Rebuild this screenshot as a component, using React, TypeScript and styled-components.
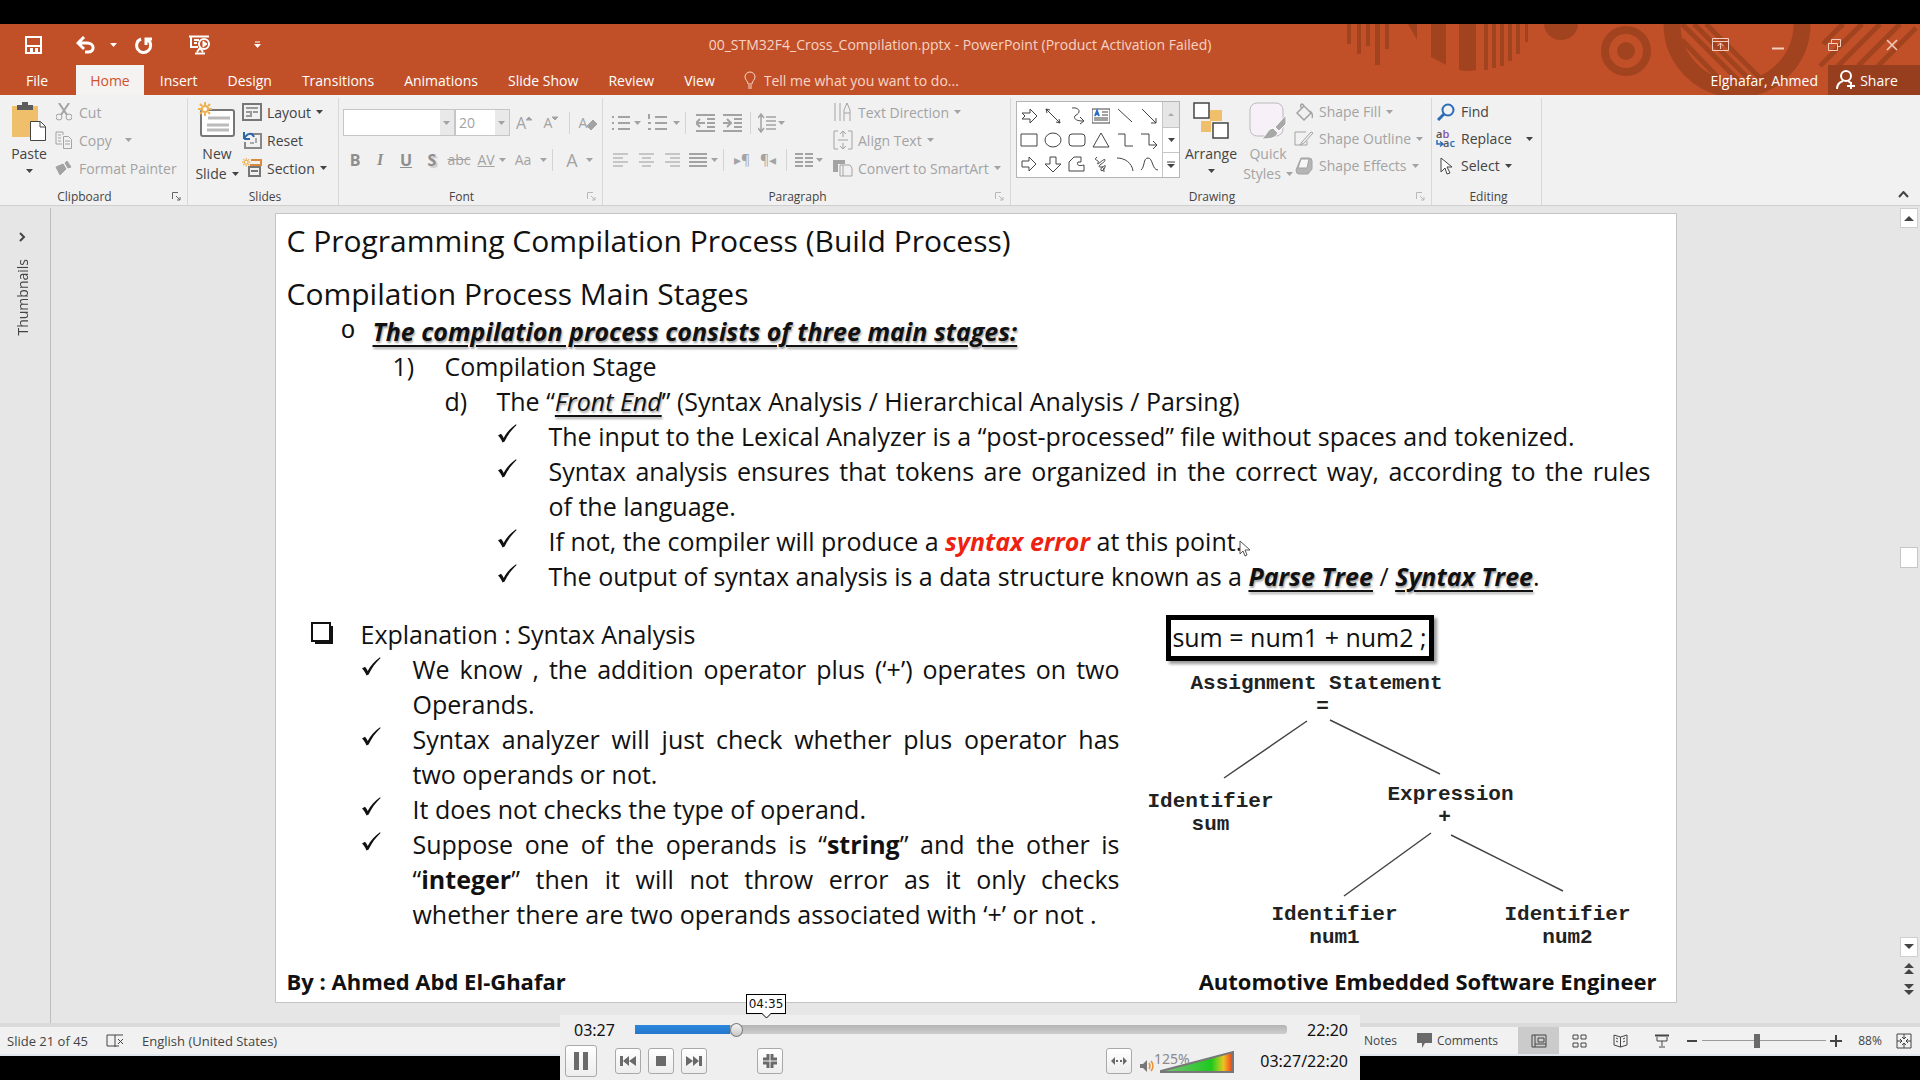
import React from "react";
import styled, { createGlobalStyle, css } from "styled-components";

const ui = '"Open Sans", "Noto Sans", sans-serif';
const slideFont = '"Open Sans", "Noto Sans", sans-serif';
const ink = "#444444";
const dim = "#a3a3a3";
const orange = "#c15029";
const darkOrange = "#a2431f";

const Global = createGlobalStyle`
  *, *::before, *::after { box-sizing: border-box; }
  body { margin: 0; background: #000; font-family: ${ui}; font-size: 14px; color: ${ink}; }
  button, select, input { font: inherit; color: inherit; }
  svg { display: block; flex: none; }
`;

const Screen = styled.div`
  position: relative;
  min-height: 100vh;
  padding: 24px 0;
  display: flex;
  flex-direction: column;
  background: #000;
  overflow: hidden;
`;

const plain = css`
  border: 0;
  margin: 0;
  padding: 0;
  background: transparent;
  display: flex;
  align-items: center;
  justify-content: center;
  white-space: nowrap;
  cursor: default;
`;

/* ---------- header ---------- */
const Header = styled.header`
  position: relative;
  background: ${orange};
  color: #fff;
`;
const Pattern = styled.svg`
  position: absolute;
  top: 0;
  right: 0;
`;
const TitleRow = styled.div`
  position: relative;
  display: grid;
  grid-template-columns: 1fr auto 1fr;
  align-items: center;
  height: 41px;
`;
const QuickAccess = styled.div`
  display: flex;
  align-items: center;
  padding-left: 4px;
  gap: 2px;
`;
const HeadButton = styled.button<{ $w: number }>`
  ${plain}
  width: ${(p) => p.$w}px;
  height: 38px;
`;
const Title = styled.h1`
  margin: 0;
  font-size: 14px;
  line-height: 20px;
  font-weight: 400;
  color: #f7d3c5;
`;
const WindowButtons = styled.div`
  display: flex;
  justify-content: flex-end;
  color: #f3cdbf;
`;
const TabRow = styled.nav`
  position: relative;
  display: flex;
  align-items: stretch;
  height: 30px;
  padding-left: 12px;
`;
const Tab = styled.button<{ $active?: boolean; $file?: boolean }>`
  ${plain}
  padding: 0 14px;
  margin-right: ${(p) => (p.$file ? 14 : 2)}px;
  background: ${(p) => (p.$active ? "#f4f3f2" : "transparent")};
  color: ${(p) => (p.$active ? "#d0512c" : "#fff")};
`;
const TellMe = styled.label`
  display: flex;
  align-items: center;
  gap: 8px;
  margin-left: 13px;
  color: #f9d6c8;
  input {
    width: 220px;
    padding: 0;
    border: 0;
    outline: 0;
    background: transparent;
  }
  input::placeholder { color: #f9d6c8; opacity: 1; }
`;
const Account = styled.div`
  display: flex;
  gap: 10px;
  margin-left: auto;
`;
const Person = styled.button`${plain}`;
const Share = styled.button`
  ${plain}
  gap: 4px;
  width: 92px;
  padding-right: 14px;
  background: #973e1f;
  color: #fff;
`;

/* ---------- ribbon ---------- */
const Ribbon = styled.section`
  display: flex;
  height: 111px;
  background: #f1f1f1;
  border-bottom: 1px solid #cfcfcf;
`;
const Group = styled.div<{ $w: number }>`
  flex: none;
  width: ${(p) => p.$w}px;
  margin: 3px 0 0;
  padding: 0 0 0 4px;
  border-right: 1px solid #d8d8d8;
  display: flex;
  flex-direction: column;
`;
const GroupBody = styled.div`
  display: flex;
  flex: 1;
`;
const GroupFoot = styled.div<{ $launch?: boolean }>`
  display: grid;
  grid-template-columns: ${(p) => (p.$launch ? "1fr 22px" : "1fr")};
  align-items: center;
  height: 18px;
  font-size: 12px;
  text-align: center;
`;
const Launcher = styled.button<{ $dim?: boolean }>`
  ${plain}
  color: ${(p) => (p.$dim ? "#b8b8b8" : "#666")};
`;
const Big = styled.button<{ $w: number; $dim?: boolean }>`
  ${plain}
  width: ${(p) => p.$w}px;
  height: 84px;
  padding-top: 4px;
  flex-direction: column;
  justify-content: flex-start;
  line-height: 20px;
  color: ${(p) => (p.$dim ? dim : ink)};
  svg.art { margin-bottom: 2px; }
  > svg:last-child { margin-top: 5px; }
`;
const CaretLine = styled.span`
  display: flex;
  align-items: center;
  justify-content: center;
  gap: 5px;
  min-height: 20px;
`;
const Stack = styled.div<{ $row: number }>`
  display: grid;
  grid-auto-rows: ${(p) => p.$row}px;
  align-content: start;
`;
const Row = styled.button<{ $dim?: boolean }>`
  ${plain}
  justify-content: flex-start;
  gap: 5px;
  color: ${(p) => (p.$dim ? dim : ink)};
`;
const Cell = styled.span`
  display: flex;
  justify-content: center;
  width: 20px;
`;
const Tools = styled.div<{ $w?: number }>`
  display: grid;
  grid-auto-rows: 27px;
  row-gap: 10px;
  align-content: start;
  padding-top: 11px;
  width: ${(p) => (p.$w ? p.$w + "px" : "auto")};
`;
const ToolRow = styled.div`
  display: flex;
  align-items: center;
  color: ${dim};
`;
const Tool = styled.button<{ $w: number; $b?: boolean; $i?: boolean; $u?: boolean; $s?: boolean; $shadow?: boolean; $pale?: boolean; $size?: number }>`
  ${plain}
  width: ${(p) => p.$w}px;
  height: 27px;
  font-size: ${(p) => p.$size ?? 16}px;
  font-weight: ${(p) => (p.$b ? 700 : 400)};
  font-style: ${(p) => (p.$i ? "italic" : "normal")};
  font-family: ${(p) => (p.$i ? '"Liberation Serif", serif' : "inherit")};
  text-decoration: ${(p) => (p.$u ? "underline" : p.$s ? "line-through" : "none")};
  text-shadow: ${(p) => (p.$shadow ? "2px 2px 1px #ccc" : "none")};
  color: ${(p) => (p.$pale ? "#c6c6c6" : p.$b ? "#8e8e8e" : "inherit")};
`;
const Bar = styled.span`
  width: 1px;
  height: 22px;
  margin: 0 5px;
  background: #d4d4d4;
`;
const Combo = styled.span<{ $w: number }>`
  position: relative;
  display: flex;
  width: ${(p) => p.$w}px;
  height: 27px;
  border: 1px solid #c6c6c6;
  background: linear-gradient(to left, #e9e9e9 14px, #fff 14px);
  select {
    appearance: none;
    width: 100%;
    padding: 0 3px;
    border: 0;
    background: transparent;
    outline: 0;
  }
  svg { position: absolute; right: 4px; top: 11px; pointer-events: none; }
`;
const Gallery = styled.div`
  display: flex;
  width: 164px;
  height: 77px;
  margin: 3px 0 0 1px;
  border: 1px solid #b5b5b5;
  background: #fff;
`;
const Shapes = styled.div`
  flex: 1;
  display: grid;
  grid-template-columns: repeat(6, 24px);
  grid-auto-rows: 24px;
  align-content: center;
`;
const GalleryScroll = styled.div`
  width: 17px;
  border-left: 1px solid #c6c6c6;
  display: grid;
  grid-template-rows: repeat(3, 1fr);
  button + button { border-top: 1px solid #c6c6c6; }
  button:first-child { background: #e6e6e6; }
`;
const ShapeButton = styled.button`${plain}`;
const Collapse = styled.button`
  ${plain}
  align-self: flex-end;
  margin-left: auto;
  width: 34px;
  height: 22px;
`;

/* ---------- workspace ---------- */
const Work = styled.main`
  flex: 1;
  display: flex;
  background: #e6e6e6;
`;
const Rail = styled.aside`
  width: 51px;
  padding: 21px 5px 0 0;
  margin-top: 2px;
  border-right: 1px solid #bdbdbd;
  display: flex;
  flex-direction: column;
  align-items: center;
  gap: 14px;
`;
const RailButton = styled.button`${plain} height: 16px;`;
const RailText = styled.span`
  writing-mode: vertical-rl;
  transform: rotate(180deg);
`;
const Canvas = styled.div`
  flex: 1;
  display: flex;
  justify-content: center;
  padding: 7px 0 20px;
`;
const Slide = styled.article`
  position: relative;
  width: 100%;
  max-width: 1402px;
  padding: 6px 19px 2px 11px;
  display: flex;
  flex-direction: column;
  background: #fff;
  border: 1px solid #c4c4c4;
  font-family: ${slideFont};
  font-size: 25px;
  line-height: 35px;
  color: #111;
`;
const SlideHead = styled.h2`
  margin: 0 0 12px;
  font-size: 30px;
  line-height: 41px;
  font-weight: 400;
  & + & { margin: 0; }
`;
const Points = styled.div`
  padding-right: 6px;
`;
const Line = styled.div<{ $indent: number; $mark: number }>`
  display: grid;
  grid-template-columns: ${(p) => p.$mark}px 1fr;
  padding-left: ${(p) => p.$indent}px;
  p { margin: 0; }
`;
const Full = styled.span`
  display: block;
  text-align: justify;
  text-align-last: justify;
`;
const Ring = styled.span`
  font-family: "Liberation Mono", monospace;
`;
const Key = styled.em<{ $bold?: boolean; $red?: boolean; $u?: boolean }>`
  font-weight: ${(p) => (p.$bold ? 700 : 400)};
  color: ${(p) => (p.$red ? "#ee2211" : "inherit")};
  text-decoration: ${(p) => (p.$u ? "underline" : "none")};
  text-decoration-thickness: 2px;
  text-underline-offset: 4px;
  text-shadow: ${(p) => (p.$u ? "1px 2px 2px rgba(0,0,0,.35)" : "none")};
`;
const Tick = styled.svg`margin: 5px 0 0 2px;`;
const Lower = styled.div`
  display: grid;
  grid-template-columns: 833px 1fr;
  column-gap: 20px;
  margin-top: 21px;
`;
const Notes = styled.div`padding-top: 2px;`;
const Tree = styled.figure`
  position: relative;
  margin: 0;
  height: 340px;
`;
const Formula = styled.div`
  width: 268px;
  height: 46px;
  margin-left: 26px;
  border: 5px solid #000;
  box-shadow: 3px 3px 3px rgba(0, 0, 0, 0.4);
  text-align: center;
  line-height: 35px;
  white-space: nowrap;
`;
const Edges = styled.svg`
  position: absolute;
  left: 0;
  top: 0;
`;
const Node = styled.div<{ $x: number; $y: number }>`
  position: absolute;
  left: ${(p) => p.$x - 140}px;
  top: ${(p) => p.$y}px;
  width: 280px;
  text-align: center;
  font: 700 21px/23px "Liberation Mono", monospace;
  color: #222;
`;
const SlideFoot = styled.footer`
  display: flex;
  justify-content: space-between;
  margin-top: auto;
  font-size: 22px;
  line-height: 38px;
  font-weight: 700;
`;
const Pointer = styled.svg`
  position: absolute;
  left: 963px;
  top: 326px;
`;
const Scroll = styled.div`
  width: 20px;
  padding: 2px 2px 22px 0;
  display: flex;
  flex-direction: column;
  align-items: center;
  justify-content: space-between;
`;
const ScrollButton = styled.button<{ $flat?: boolean }>`
  ${plain}
  width: 18px;
  height: ${(p) => (p.$flat ? 22 : 20)}px;
  background: ${(p) => (p.$flat ? "transparent" : "#fff")};
  border: ${(p) => (p.$flat ? 0 : "1px solid #cfcfcf")};
`;
const ScrollEnd = styled.div`
  display: grid;
`;
const Thumb = styled.span`
  width: 18px;
  height: 21px;
  margin-bottom: 50px;
  background: #fff;
  border: 1px solid #c6c6c6;
`;

/* ---------- status bar ---------- */
const Status = styled.footer`
  display: flex;
  align-items: center;
  height: 33px;
  padding: 0 6px 0 7px;
  border-top: 4px solid #dadada;
  border-bottom: 2px solid #dfe6ee;
  background: #f1f1f1;
  font-size: 12px;
`;
const StatusButton = styled.button<{ $w?: number; $on?: boolean }>`
  ${plain}
  gap: 5px;
  height: 27px;
  width: ${(p) => (p.$w ? p.$w + "px" : "auto")};
  background: ${(p) => (p.$on ? "#cbcbcb" : "transparent")};
`;
const StatusLeft = styled.div`
  display: flex;
  align-items: center;
  gap: 18px;
  font-size: 13px;
`;
const StatusRight = styled.div`
  display: flex;
  align-items: center;
  margin-left: auto;
`;
const StatusTexts = styled.div`
  display: flex;
  gap: 20px;
  margin-right: 20px;
`;
const Zoom = styled.input`
  appearance: none;
  width: 124px;
  height: 16px;
  margin: 0;
  background: linear-gradient(#9a9a9a, #9a9a9a) center / 100% 1px no-repeat;
  &::-webkit-slider-thumb {
    appearance: none;
    width: 6px;
    height: 14px;
    background: #6a6a6a;
  }
`;
const Percent = styled.output`
  width: 48px;
  text-align: center;
`;

/* ---------- media player ---------- */
const Player = styled.section`
  position: absolute;
  bottom: 0;
  left: calc(50% - 400px);
  width: 800px;
  height: 65px;
  padding: 2px 12px 0 5px;
  background: #efefef;
  font-family: "Noto Sans", "Open Sans", sans-serif;
  font-size: 16px;
  color: #111;
`;
const SeekRow = styled.div`
  display: flex;
  align-items: center;
  height: 25px;
  padding-left: 9px;
`;
const Time = styled.time<{ $right?: boolean }>`
  width: 61px;
  text-align: ${(p) => (p.$right ? "right" : "left")};
`;
const Track = styled.div`
  flex: 1;
  height: 9px;
  display: flex;
  align-items: center;
  border-radius: 3px;
  background: linear-gradient(#b4b4b4, #cdcdcd);
`;
const Seek = styled.input`
  appearance: none;
  flex: 1;
  height: 15px;
  margin: 0 -6px;
  background: linear-gradient(#2a86dc, #2478cc) 6px center / 95px 9px no-repeat;
  &::-webkit-slider-thumb {
    appearance: none;
    width: 13px;
    height: 14px;
    border: 1px solid #7d7d7d;
    border-radius: 50%;
    background: linear-gradient(#f4f4f4, #c9c9c9);
  }
`;
const Controls = styled.div`
  display: flex;
  align-items: center;
  height: 38px;
`;
const PlayerButton = styled.button<{ $big?: boolean; $before?: number }>`
  ${plain}
  width: ${(p) => (p.$big ? 32 : 26)}px;
  height: ${(p) => (p.$big ? 32 : 26)}px;
  margin-left: ${(p) => p.$before ?? 7}px;
  border: 1px solid #a9a9a9;
  border-radius: 3px;
  background: linear-gradient(#fff, #ededed);
  color: #6a6a6a;
`;
const Volume = styled.label`
  position: relative;
  display: flex;
  align-items: flex-end;
  height: 26px;
  margin-left: 7px;
  input {
    position: absolute;
    inset: 0;
    width: 100%;
    margin: 0;
    opacity: 0;
  }
  output {
    position: absolute;
    left: 15px;
    top: 3px;
    font-size: 14px;
    line-height: 16px;
    color: #8a8a8a;
  }
`;
const Clock = styled.span`margin-left: auto;`;
const Bubble = styled.div`
  position: absolute;
  left: 186px;
  top: -21px;
  width: 40px;
  height: 20px;
  border: 1px solid #000;
  background: #fff;
  text-align: center;
  font: 12px/18px "DejaVu Sans", sans-serif;
  svg { position: absolute; left: 15px; top: 18px; }
`;

/* ---------- drawings ---------- */
type A = { w: number; h: number; children: React.ReactNode; s?: number; c?: string; f?: string };
const Art = ({ w, h, children, s = 1, c, f = "none" }: A) => (
  <svg className={c} width={w} height={h} viewBox={`0 0 ${w} ${h}`} fill={f} stroke="currentColor" strokeWidth={s} aria-hidden="true">
    {children}
  </svg>
);
const Caret = () => (
  <svg width="7" height="4" viewBox="0 0 7 4" fill="currentColor" aria-hidden="true"><path d="M0 0h7L3.5 4z" /></svg>
);
const Lines = ({ rows, w = 18, h = 18 }: { rows: [number, number][]; w?: number; h?: number }) => (
  <Art w={w} h={h} s={2}>
    {rows.map(([a, b], i) => <path key={i} d={`M${a} ${3 + i * 4}H${b}`} />)}
  </Art>
);
const Check = () => (
  <Tick width="19" height="20" viewBox="0 0 19 20" fill="#111"><path d="M0 11.5L3 9.8C4.200 11 5 12.500 5.700 14C8.600 8.600 12.600 4 18 .3L18.600 1C13.600 5.800 9.600 11 6.600 17.600L4.500 18.400C3.400 15.800 2 13.400 0 11.5z" /></Tick>
);
const shapes: React.ReactNode[] = [
  <path d="M2 6h8V2l7 7-7 7v-4H2l3-3z" />,
  <path d="M2 2l14 14M2 2l4 1M2 2l1 4M16 16l-4-1M16 16l-1-4" />,
  <path d="M4 1c8-1 9 5 4 7-3 2-2 6 7 6M12 10l4 4-4 3" />,
  <g><path d="M0 2h18v14H0zM10 5h6M10 8h6M2 11h14M2 13h14" /><path d="M3 9l2-5 2 5M4 7h3" stroke="#2a6fc0" strokeWidth="2" /></g>,
  <path d="M2 2l14 13" />,
  <path d="M2 2l14 14M16 16v-5M16 16h-5" />,
  <path d="M1 3h16v12H1z" />,
  <ellipse cx="9" cy="9" rx="8" ry="7" />,
  <rect x="1" y="3" width="16" height="12" rx="3" />,
  <path d="M9 2l8 14H1z" />,
  <path d="M2 3h7v12h8" />,
  <path d="M1 3h8v11h7M13 10l4 4-4 4" />,
  <path d="M2 6h7V2l7 7-7 7v-4H2z" />,
  <path d="M6 2h6v7h5l-8 8-8-8h5z" />,
  <path d="M1 16V7l5-5h7v5h-3c-2 4 2 4 6 3v6z" />,
  <path d="M5 2c-5 4 3 2 1 6s7-6 7-3-9 6-5 7 6-4 5 0-5 5-4 2 3-2 3 3" />,
  <path d="M1 3c8 0 15 5 16 13" />,
  <path d="M1 15C5 12 3 3 8 3s4 12 10 12" />,
];
const Burst = ({ x = 0, y = 0 }: { x?: number; y?: number }) => (
  <g stroke="#efb152" strokeWidth="2" transform={`translate(${x} ${y})`}><path d="M7 0v3M7 11v3M0 7h3M11 7h3M2 2l2 2M10 10l2 2M12 2l-2 2M2 12l2-2" /><circle cx="7" cy="7" r="3" fill="#fff" /></g>
);

const Foot = ({ name, launcher, faded }: { name: string; launcher?: boolean; faded?: boolean }) => (
  <GroupFoot $launch={launcher}>
    <span>{name}</span>
    {launcher && (
      <Launcher $dim={faded} aria-label={name + " settings"}>
        <Art w={9} h={9}><path d="M.5 7V.5H6M4 4l4 4M8 5v3H5" /></Art>
      </Launcher>
    )}
  </GroupFoot>
);

const tabs = ["Insert", "Design", "Transitions", "Animations", "Slide Show", "Review", "View"];

export default function App() {
  return (
    <Screen>
      <Global />
      <Header>
        <Pattern width="580" height="71" viewBox="1340 24 580 71" fill={darkOrange}>
          <path d="M1347 24h4v20h-4zM1357 24h4v30h-4zM1366 24h4v22h-4zM1375 24h5v41h-5zM1385 24h4v25h-4zM1408 24h9v16zM1431 24h15v41l-15-8zM1459 24h17v46q-8 2-17 0z" />
          <path d="M1484 24h4v46h-4zM1492 24h4v44h-4zM1500 24h4v42h-4zM1508 24h4v37h-4zM1516 24h4v30h-4zM1525 24h3v18h-3z" />
          <path d="M1544 24h34a17 16 0 0 1-34 0z" />
          <circle cx="1626" cy="51" r="21" fill="none" stroke={darkOrange} strokeWidth="8" />
          <circle cx="1626" cy="51" r="9" />
          <circle cx="1737" cy="24" r="65" fill="none" stroke={darkOrange} strokeWidth="17" />
          <g stroke={darkOrange} strokeWidth="5"><path d="M1682 24l62 62M1694 24l58 58M1706 24l54 54M1682 40l44 46M1843 24l-20 20M1862 24l-42 42M1880 24l-42 42M1900 24l-42 42M1916 28l-38 38" /></g>
        </Pattern>
        <TitleRow>
          <QuickAccess>
            <HeadButton $w={58} aria-label="Save"><Art w={17} h={18} s={2}><path d="M1 1h15v16H1zM1 10h15" /><path d="M5 12h3v5H5zM10 12h3v5h-3z" fill="#fff" stroke="none" /></Art></HeadButton>
            <HeadButton $w={44} aria-label="Undo"><Art w={20} h={18} s={3}><path d="M2 7h9c8 0 8 9 1 9H9M8 1L2 7l6 6" /></Art></HeadButton>
            <HeadButton $w={6} aria-label="Undo history"><Caret /></HeadButton>
            <HeadButton $w={52} aria-label="Repeat"><Art w={18} h={18} s={3}><path d="M6 3a7 7 0 1 0 7 1M11 9V3h6" /></Art></HeadButton>
            <HeadButton $w={56} aria-label="Start slide show"><Art w={22} h={20}><path d="M0 1.500h20M2 2v10h7M5 5h5M5 8h3M8 17l3-4 3 4M6 18.500h10" strokeWidth="2" /><circle cx="15" cy="9" r="5" strokeWidth="2" /><path d="M14 6l4 3-4 3z" fill="#fff" /></Art></HeadButton>
            <HeadButton $w={54} aria-label="Customize toolbar"><Art w={7} h={8}><path d="M1 1h5" /><path d="M0 3h7L3.500 7z" fill="#fff" stroke="none" /></Art></HeadButton>
          </QuickAccess>
          <Title>00_STM32F4_Cross_Compilation.pptx - PowerPoint (Product Activation Failed)</Title>
          <WindowButtons>
            <HeadButton $w={57} aria-label="Ribbon display"><Art w={17} h={13}><path d="M.5.5h16v12H.5zM.5 3.500h16M8.500 11V5M5.500 8l3-3 3 3" /></Art></HeadButton>
            <HeadButton $w={57} aria-label="Minimize"><Art w={12} h={12}><path d="M0 9.500h12" strokeWidth="2" /></Art></HeadButton>
            <HeadButton $w={57} aria-label="Restore"><Art w={13} h={12}><path d="M.5 4.500h9v7h-9zM3.500 4V.500h9v7H10" /></Art></HeadButton>
            <HeadButton $w={57} aria-label="Close"><Art w={12} h={12}><path d="M1 1l10 10M11 1L1 11" strokeWidth="1.500" /></Art></HeadButton>
          </WindowButtons>
        </TitleRow>
        <TabRow>
          <Tab $file>File</Tab>
          <Tab $active>Home</Tab>
          {tabs.map((t) => <Tab key={t}>{t}</Tab>)}
          <TellMe>
            <Art w={12} h={18}><path d="M4 13c0-3-3-4-3-7a5 5 0 0 1 10 0c0 3-3 4-3 7zM4 15h4M4 17h4" /></Art>
            <input aria-label="Tell me" placeholder="Tell me what you want to do..." />
          </TellMe>
          <Account>
            <Person>Elghafar, Ahmed</Person>
            <Share>
              <Art w={20} h={20} s={2}><circle cx="10" cy="6" r="5" /><path d="M1 19c0-5 3-7 6-8M12 11l3 2M15 12v7M11 16h8" /></Art>
              Share
            </Share>
          </Account>
        </TabRow>
      </Header>

      <Ribbon>
        <Group $w={188}>
          <GroupBody>
            <Big $w={50}>
              <Art w={36} h={40} c="art"><path d="M1 4h26v31H1z" fill="#f0bf6c" stroke="none" /><path d="M6 3h5V0h6v3h5v5H6z" fill="#5c5c5c" stroke="none" /><path d="M19.500 19.500h10l5 5v14h-15z" fill="#fff" /><path d="M29 20v5h5" /></Art>
              Paste
              <Caret />
            </Big>
            <Stack $row={28}>
              <Row $dim><Cell><Art w={16} h={18}><path d="M3 0l8 12M13 0L5 12" strokeWidth="2" /><circle cx="3" cy="14" r="3" /><circle cx="13" cy="14" r="3" /></Art></Cell>Cut</Row>
              <Row $dim><Cell><Art w={18} h={18}><path d="M7 13H1V1h7v3M3 4h3M3 7h3M3 10h3M8.500 5.500h5l3 3v9h-8zM10 10h5M10 13h5" /></Art></Cell>Copy<CaretLine>&nbsp;<Caret /></CaretLine></Row>
              <Row $dim><Cell><Art w={18} h={16} f="currentColor"><path d="M1 7l7-3 3 5-6 6zM10 3l2-2 4 6-3 1z" /></Art></Cell>Format Painter</Row>
            </Stack>
          </GroupBody>
          <Foot name="Clipboard" launcher />
        </Group>

        <Group $w={151}>
          <GroupBody>
            <Big $w={50}>
              <Art w={38} h={40} c="art"><rect x="3" y="8" width="33" height="26" rx="2" fill="#fff" stroke="#777" strokeWidth="2" /><path d="M10 16h22M9 23h22M9 28h22" stroke="#bbb" strokeWidth="3" /><Burst /></Art>
              <span>New</span>
              <CaretLine>Slide <Caret /></CaretLine>
            </Big>
            <Stack $row={28}>
              <Row><Cell><Art w={20} h={18}><path d="M1 1h18v16H1z" strokeWidth="2" stroke="#777" /><path d="M4 5h12M4 9h5v4H4M11 9h5" stroke="#999" strokeWidth="2" /></Art></Cell>Layout<Caret /></Row>
              <Row><Cell><Art w={20} h={18}><path d="M10 3h9v14H3v-6" stroke="#888" strokeWidth="2" /><path d="M2 8l0-7M2 8h6M2 8c3-6 8-7 10-2" stroke="#2c66a8" strokeWidth="2" /><path d="M8 12h4M14 7v5" stroke="#aaa" strokeWidth="2" /></Art></Cell>Reset</Row>
              <Row><Cell><Art w={20} h={20}><g transform="scale(.6)"><Burst /></g><path d="M9 2h10v5H8" stroke="#d98a3c" strokeWidth="2" /><path d="M7 9h11v9H7zM9 13h7" stroke="#777" strokeWidth="2" /></Art></Cell>Section<Caret /></Row>
            </Stack>
          </GroupBody>
          <Foot name="Slides" />
        </Group>

        <Group $w={264}>
          <GroupBody>
            <Tools>
              <ToolRow>
                <Combo $w={112}><select aria-label="Font"><option></option></select><Caret /></Combo>
                <Combo $w={55}><select aria-label="Font size"><option>20</option></select><Caret /></Combo>
                <Tool $w={28} aria-label="Grow font">A<Art w={6} h={14}><path d="M0 4l3-3 3 3z" fill="currentColor" /></Art></Tool>
                <Tool $w={26} $size={14} aria-label="Shrink font">A<Art w={6} h={14}><path d="M0 1h6L3 4z" fill="currentColor" /></Art></Tool>
                <Bar />
                <Tool $w={26} $size={14} aria-label="Clear formatting">A<Art w={10} h={16}><path d="M0 11l6-6 4 4-6 6z" fill="currentColor" /></Art></Tool>
              </ToolRow>
              <ToolRow>
                <Tool $w={24} $b>B</Tool>
                <Tool $w={26} $b $i>I</Tool>
                <Tool $w={26} $b $u>U</Tool>
                <Tool $w={26} $b $shadow>S</Tool>
                <Tool $w={28} $s $size={14}>abc</Tool>
                <Tool $w={26} $u $size={14}>AV</Tool>
                <Caret />
                <Tool $w={34} $size={14}>Aa</Tool>
                <Caret />
                <Bar />
                <Tool $w={28} $size={18}>A</Tool>
                <Caret />
              </ToolRow>
            </Tools>
          </GroupBody>
          <Foot name="Font" launcher faded />
        </Group>

        <Group $w={408}>
          <GroupBody>
            <Tools $w={226}>
              <ToolRow>
                <Tool $w={27} aria-label="Bullets"><Art w={18} h={18} s={2}><path d="M0 3h2M0 9h2M0 15h2M6 3h12M6 9h12M6 15h12" /></Art></Tool>
                <Caret />
                <Tool $w={32} aria-label="Numbering"><Art w={20} h={18} s={2}><path d="M2 0v5M1 9h3M1 15h3M8 3h12M8 9h12M8 15h12" /></Art></Tool>
                <Caret />
                <Bar />
                <Tool $w={28} aria-label="Decrease indent"><Art w={19} h={18} s={2}><path d="M0 1h19M11 5h8M11 9h8M11 13h8M0 17h19M0 9h9M4 5L0 9l4 4" /></Art></Tool>
                <Tool $w={26} aria-label="Increase indent"><Art w={19} h={18} s={2}><path d="M0 1h19M11 5h8M11 9h8M11 13h8M0 17h19M0 9h9M4 5l4 4-4 4" /></Art></Tool>
                <Bar />
                <Tool $w={22} aria-label="Line spacing"><Art w={18} h={20}><path d="M3 2v16M0 5l3-4 3 4M0 15l3 4 3-4M8 4h10M8 8h10M8 12h10M8 16h10" strokeWidth="1.500" /></Art></Tool>
                <Caret />
              </ToolRow>
              <ToolRow>
                <Tool $w={26} $pale aria-label="Align left"><Lines w={15} rows={[[0, 15], [0, 10], [0, 15], [0, 10]]} /></Tool>
                <Tool $w={26} $pale aria-label="Center"><Lines w={15} rows={[[0, 15], [3, 12], [0, 15], [3, 12]]} /></Tool>
                <Tool $w={26} $pale aria-label="Align right"><Lines w={15} rows={[[0, 15], [5, 15], [0, 15], [5, 15]]} /></Tool>
                <Tool $w={26} aria-label="Justify"><Lines rows={[[0, 18], [0, 18], [0, 18], [0, 18]]} /></Tool>
                <Caret />
                <Bar />
                <Tool $w={26} $size={14} aria-label="Left to right">▸¶</Tool>
                <Tool $w={26} $size={14} aria-label="Right to left">¶◂</Tool>
                <Bar />
                <Tool $w={24} aria-label="Columns"><Art w={18} h={18} s={2}><path d="M0 3h8M10 3h8M0 7h8M10 7h8M0 11h8M10 11h8M0 15h8M10 15h8" /></Art></Tool>
                <Caret />
              </ToolRow>
            </Tools>
            <Stack $row={28}>
              <Row $dim><Cell><Art w={20} h={20}><path d="M2 1v18M7 1v18M11 19V8l3-7 3 7v11M11 11h6" /></Art></Cell>Text Direction<Caret /></Row>
              <Row $dim><Cell><Art w={20} h={20}><path d="M5 1H1v18h4M15 1h4v18h-4M5 10h10M10 1v6M7 4l3-3 3 3M10 13v6M7 16l3 3 3-3" /></Art></Cell>Align Text<Caret /></Row>
              <Row $dim><Cell><Art w={20} h={18}><path d="M0 1h12v4H5v8H0z" fill="currentColor" stroke="none" /><path d="M7 6h10l2 3v8H7zM10 6v11" /></Art></Cell>Convert to SmartArt<Caret /></Row>
            </Stack>
          </GroupBody>
          <Foot name="Paragraph" launcher faded />
        </Group>

        <Group $w={421}>
          <GroupBody>
            <Gallery>
              <Shapes>
                {shapes.map((s, i) => <ShapeButton key={i} aria-label={"Shape " + (i + 1)}><Art w={18} h={18}>{s}</Art></ShapeButton>)}
              </Shapes>
              <GalleryScroll>
                <ShapeButton aria-label="Previous shapes"><Art w={6} h={4}><path d="M0 3l3-3 3 3z" fill="#aaa" stroke="none" /></Art></ShapeButton>
                <ShapeButton aria-label="Next shapes"><Caret /></ShapeButton>
                <ShapeButton aria-label="More shapes"><Art w={8} h={8}><path d="M0 1h8" /><path d="M0 3h8L4 7z" fill="currentColor" stroke="none" /></Art></ShapeButton>
              </GalleryScroll>
            </Gallery>
            <Big $w={62}>
              <Art w={36} h={40} c="art"><path d="M17 8h12v11H17zM8 19h10v11H8z" fill="#f0bf6c" stroke="none" /><path d="M1 1h15v15H1zM20 21h15v15H20z" fill="#fff" strokeWidth="1.500" /></Art>
              Arrange
              <Caret />
            </Big>
            <Big $w={52} $dim>
              <Art w={38} h={40} c="art"><rect x="1" y="1" width="33" height="33" rx="7" fill="#f7f0f8" stroke="#bdb7be" /><path d="M37 13v9l-7 7-4-4zM24 26l5 5c-3 6-9 6-17 6 5-2 6-10 12-11z" fill="#a8a8a8" stroke="#fff" /></Art>
              <span>Quick</span>
              <CaretLine>Styles <Caret /></CaretLine>
            </Big>
            <Stack $row={27}>
              <Row $dim><Cell><Art w={18} h={18}><path d="M2 10l7-7 7 7-7 7zM9 3C7-1 4 2 7 6M15 8c3 3 3 5 2 7" strokeWidth="1.500" /></Art></Cell>Shape Fill<Caret /></Row>
              <Row $dim><Cell><Art w={20} h={16}><path d="M12 1H1v13h12v-4M17 1L8 11l-2 3 4-2 9-10z" /></Art></Cell>Shape Outline<Caret /></Row>
              <Row $dim><Cell><Art w={18} h={18}><path d="M6 1h8q3 0 3 3v8l-4 5H4q-3 0-3-4z" fill="#b5b5b5" /><path d="M6 2h8l-2 9H3z" fill="#f6f6f6" /></Art></Cell>Shape Effects<Caret /></Row>
            </Stack>
          </GroupBody>
          <Foot name="Drawing" launcher faded />
        </Group>

        <Group $w={110}>
          <GroupBody>
            <Stack $row={27}>
              <Row><Cell><Art w={18} h={18} s={2}><circle cx="11" cy="7" r="5.500" stroke="#2b6cb8" /><path d="M7 11l-6 6" stroke="#2b6cb8" strokeWidth="3" /></Art></Cell>Find</Row>
              <Row><Cell><svg width="20" height="26" viewBox="0 0 20 26" fontFamily="Open Sans" fontWeight="600" fontSize="11"><text x="0" y="12" fill="#555">a<tspan fill="#8b4fb0">b</tspan></text><text x="7" y="21" fill="#555">a<tspan fill="#2b6cb8">c</tspan></text><path d="M1 14v4h5M4 15.500l3 2.500-3 2.500" fill="none" stroke="#2b6cb8" strokeWidth="1.500" /></svg></Cell>Replace<CaretLine>&nbsp;<Caret /></CaretLine></Row>
              <Row><Cell><Art w={13} h={18}><path d="M1 1v14l4-4 2 6 3-1-3-6h5z" fill="#fff" /></Art></Cell>Select<Caret /></Row>
            </Stack>
          </GroupBody>
          <Foot name="Editing" />
        </Group>
        <Collapse aria-label="Collapse ribbon"><Art w={11} h={7} s={2}><path d="M1 6l4.500-5L10 6" /></Art></Collapse>
      </Ribbon>

      <Work>
        <Rail>
          <RailButton aria-label="Expand thumbnails"><Art w={7} h={10} s={2}><path d="M1 1l4 4-4 4" /></Art></RailButton>
          <RailText>Thumbnails</RailText>
        </Rail>
        <Canvas>
          <Slide>
            <SlideHead>C Programming Compilation Process (Build Process)</SlideHead>
            <SlideHead>Compilation Process Main Stages</SlideHead>
            <Points>
              <Line $indent={54} $mark={32}><Ring>o</Ring><p><Key $bold $u>The compilation process consists of three main stages:</Key></p></Line>
              <Line $indent={106} $mark={52}><span>1)</span><p>Compilation Stage</p></Line>
              <Line $indent={158} $mark={52}><span>d)</span><p>The “<Key $u>Front End</Key>” (Syntax Analysis / Hierarchical Analysis / Parsing)</p></Line>
              <Line $indent={209} $mark={53}><Check /><p>The input to the Lexical Analyzer is a “post-processed” file without spaces and tokenized.</p></Line>
              <Line $indent={209} $mark={53}><Check /><p><Full>Syntax analysis ensures that tokens are organized in the correct way, according to the rules</Full> of the language.</p></Line>
              <Line $indent={209} $mark={53}><Check /><p>If not, the compiler will produce a <Key $bold $red>syntax error</Key> at this point.</p></Line>
              <Line $indent={209} $mark={53}><Check /><p>The output of syntax analysis is a data structure known as a <Key $bold $u>Parse Tree</Key> / <Key $bold $u>Syntax Tree</Key>.</p></Line>
            </Points>
            <Lower>
              <Notes>
                <Line $indent={22} $mark={52}>
                  <Tick width="22" height="22" viewBox="0 0 22 22"><path d="M4 4h18v18H4z" fill="#111" /><path d="M1 1h18v18H1z" fill="#fff" stroke="#111" strokeWidth="2" /></Tick>
                  <p>Explanation : Syntax Analysis</p>
                </Line>
                <Line $indent={73} $mark={53}><Check /><p><Full>We know , the addition operator plus (‘+’) operates on two</Full> Operands.</p></Line>
                <Line $indent={73} $mark={53}><Check /><p><Full>Syntax analyzer will just check whether plus operator has</Full> two operands or not.</p></Line>
                <Line $indent={73} $mark={53}><Check /><p>It does not checks the type of operand.</p></Line>
                <Line $indent={73} $mark={53}><Check /><p><Full>Suppose one of the operands is “<b>string</b>” and the other is</Full> <Full>“<b>integer</b>” then it will not throw error as it only checks</Full> whether there are two operands associated with ‘+’ or not .</p></Line>
              </Notes>
              <Tree>
                <Formula>sum = num1 + num2 ;</Formula>
                <Edges width="500" height="340" viewBox="1140 615 500 340" stroke="#444" strokeWidth="1.500">
                  <path d="M1307 721L1224 778M1330 720L1440 774M1431 833L1344 896M1451 835L1563 891" />
                </Edges>
                <Node $x={177} $y={57}>Assignment Statement</Node>
                <Node $x={183} $y={80}>=</Node>
                <Node $x={71} $y={175}>Identifier<br />sum</Node>
                <Node $x={311} $y={168}>Expression</Node>
                <Node $x={305} $y={191}>+</Node>
                <Node $x={195} $y={288}>Identifier<br />num1</Node>
                <Node $x={428} $y={288}>Identifier<br />num2</Node>
              </Tree>
            </Lower>
            <SlideFoot><span>By : Ahmed Abd El-Ghafar</span><span>Automotive Embedded Software Engineer</span></SlideFoot>
            <Pointer width="12" height="18" viewBox="0 0 12 18" fill="#fff" stroke="#555"><path d="M1 1v13l3-3 2 5 2-1-2-5h5z" /></Pointer>
          </Slide>
        </Canvas>
        <Scroll>
          <ScrollButton aria-label="Scroll up"><Art w={10} h={6}><path d="M0 6l5-5 5 5z" fill="currentColor" stroke="none" /></Art></ScrollButton>
          <Thumb />
          <ScrollEnd>
            <ScrollButton aria-label="Scroll down"><Art w={10} h={6}><path d="M0 0h10L5 5z" fill="currentColor" stroke="none" /></Art></ScrollButton>
            <ScrollButton $flat aria-label="Previous slide"><Art w={10} h={12}><path d="M0 6l5-5 5 5zM0 12l5-5 5 5z" fill="currentColor" stroke="none" /></Art></ScrollButton>
            <ScrollButton $flat aria-label="Next slide"><Art w={10} h={12}><path d="M0 0h10L5 5zM0 6h10l-5 5z" fill="currentColor" stroke="none" /></Art></ScrollButton>
          </ScrollEnd>
        </Scroll>
      </Work>

      <Status>
        <StatusLeft>
          <span>Slide 21 of 45</span>
          <StatusButton aria-label="Spelling"><Art w={18} h={15}><path d="M9 2v12M9 2H1v11h8M9 2h8M9 13h4M12 6l5 5M17 6l-5 5" /></Art></StatusButton>
          <span>English (United States)</span>
        </StatusLeft>
        <StatusRight>
          <StatusTexts>
            <StatusButton>Notes</StatusButton>
            <StatusButton><Art w={15} h={15}><path d="M0 0h15v10H8l-3 5v-5H0z" fill="#6a6a6a" stroke="none" /></Art>Comments</StatusButton>
          </StatusTexts>
          <StatusButton $w={41} $on aria-label="Normal view"><Art w={16} h={14}><path d="M1 1h14v12H1zM4 1v12M7 4h6v4H7zM4 10h11" /></Art></StatusButton>
          <StatusButton $w={41} aria-label="Slide sorter"><Art w={15} h={14}><path d="M1 1h5v4H1zM9 1h5v4H9zM1 9h5v4H1zM9 9h5v4H9z" /></Art></StatusButton>
          <StatusButton $w={41} aria-label="Reading view"><Art w={15} h={14}><path d="M7.500 3v10M7.500 3L1 1v10l6.500 2L14 11V1zM3 4l2 1M3 7l2 1M12 4l-2 1M12 7l-2 1" /></Art></StatusButton>
          <StatusButton $w={41} aria-label="Slide show"><Art w={14} h={14}><path d="M0 1.500h14" strokeWidth="2" /><path d="M2 3v4h10V3M7 7v5M4 13h6" /></Art></StatusButton>
          <StatusButton $w={20} aria-label="Zoom out"><Art w={10} h={10} s={2}><path d="M0 5h10" /></Art></StatusButton>
          <Zoom type="range" min={0} max={100} defaultValue={44} aria-label="Zoom" />
          <StatusButton $w={20} aria-label="Zoom in"><Art w={12} h={12} s={2}><path d="M0 6h12M6 0v12" /></Art></StatusButton>
          <Percent>88%</Percent>
          <StatusButton $w={20} aria-label="Fit to window"><Art w={16} h={16}><path d="M1 1h14v14H1zM8 1v5M6 4l2 2 2-2M8 15v-5M6 12l2-2 2 2M1 8h5M4 6l2 2-2 2M15 8h-5M12 6l-2 2 2 2" /></Art></StatusButton>
        </StatusRight>
      </Status>

      <Player aria-label="Media player">
        <Bubble>04:35<svg width="9" height="6" viewBox="0 0 9 6"><path d="M0 0h9L4.500 5z" fill="#fff" /><path d="M0 .5L4.500 5L9 .5" fill="none" stroke="#000" /></svg></Bubble>
        <SeekRow>
          <Time>03:27</Time>
          <Track><Seek type="range" min={0} max={1340} defaultValue={207} aria-label="Position" /></Track>
          <Time $right>22:20</Time>
        </SeekRow>
        <Controls>
          <PlayerButton $big $before={0} aria-label="Pause"><Art w={16} h={18}><path d="M1 0h5v18H1zM10 0h5v18h-5z" fill="currentColor" stroke="none" /></Art></PlayerButton>
          <PlayerButton $before={18} aria-label="Previous"><Art w={16} h={12}><path d="M0 1h3v10H0zM9 1v10L3 6zM16 1v10l-7-5z" fill="currentColor" stroke="none" /></Art></PlayerButton>
          <PlayerButton aria-label="Stop"><Art w={10} h={10}><path d="M0 0h10v10H0z" fill="currentColor" stroke="none" /></Art></PlayerButton>
          <PlayerButton aria-label="Next"><Art w={16} h={12}><path d="M13 1h3v10h-3zM0 1v10l7-5zM7 1v10l6-5z" fill="currentColor" stroke="none" /></Art></PlayerButton>
          <PlayerButton $before={50} aria-label="Exit full screen"><Art w={14} h={14}><path d="M5 0v5H0M9 0v5h5M5 14V9H0M9 14V9h5" strokeWidth="3" /></Art></PlayerButton>
          <PlayerButton $before={323} aria-label="Fit width"><Art w={16} h={8}><path d="M0 4l4-4v8zM16 4l-4-4v8zM5 3h2v2H5zM9 3h2v2H9z" fill="currentColor" stroke="none" /></Art></PlayerButton>
          <Volume>
            <svg width="96" height="24" viewBox="0 0 96 24">
              <defs><linearGradient id="vol"><stop offset="0" stopColor="#7fc07f" /><stop offset=".7" stopColor="#1fc81f" /><stop offset=".8" stopColor="#8fd020" /><stop offset=".87" stopColor="#f0c020" /><stop offset=".95" stopColor="#f06a20" /><stop offset="1" stopColor="#e84020" /></linearGradient></defs>
              <path d="M22 21L94 2v20H22z" fill="url(#vol)" stroke="#777" strokeWidth="2" />
              <path d="M1 14h3l4-4v12l-4-4H1z" fill="#777" />
              <path d="M10 13q2 3 0 6M12 11q4 5 0 10" fill="none" stroke="#f0902a" strokeWidth="1.500" />
            </svg>
            <output>125%</output>
            <input type="range" min={0} max={125} defaultValue={125} aria-label="Volume" />
          </Volume>
          <Clock>03:27/22:20</Clock>
        </Controls>
      </Player>
    </Screen>
  );
}
